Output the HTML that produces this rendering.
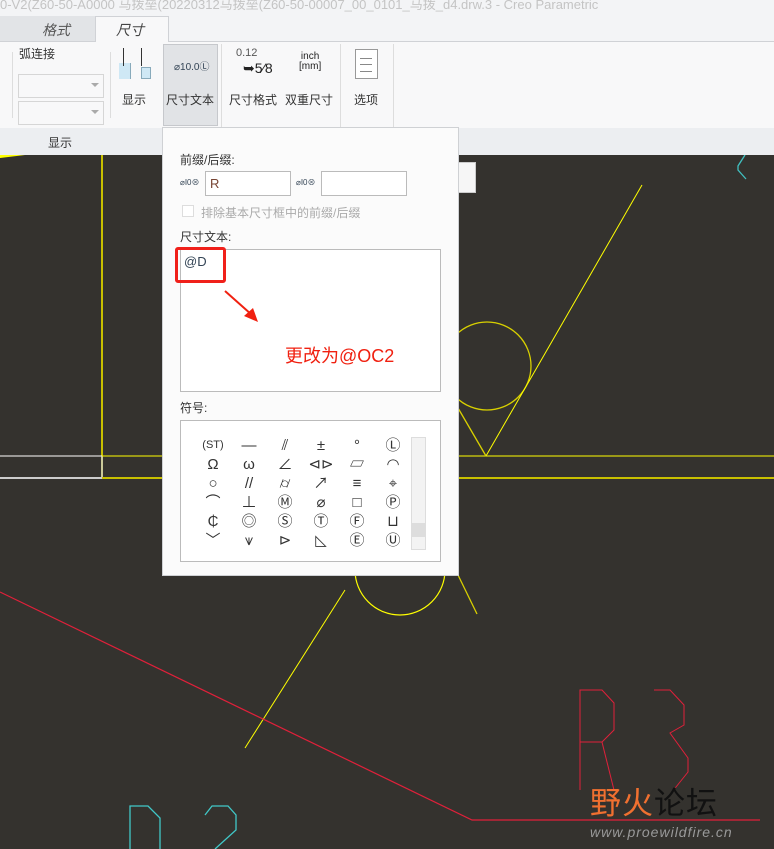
<!DOCTYPE html>
<html><head><meta charset="utf-8"><style>
*{margin:0;padding:0;box-sizing:border-box}
body{width:774px;height:849px;overflow:hidden;background:#34322e;font-family:"Liberation Sans","Noto Sans CJK SC",sans-serif;position:relative}
.abs{position:absolute}
.t{font-size:12px;color:#333;white-space:nowrap}
</style></head><body>
<svg class="abs" style="left:0;top:0" width="774" height="849">
<rect x="0" y="155" width="774" height="694" fill="#34322e"/>
<line x1="102" y1="155" x2="102" y2="478" stroke="#c8c000" stroke-width="2"/>
<line x1="0" y1="456" x2="102" y2="456" stroke="#fff" stroke-width="1"/>
<line x1="0" y1="478" x2="102" y2="478" stroke="#ccc" stroke-width="2"/>
<line x1="102" y1="456" x2="102" y2="478" stroke="#ccc" stroke-width="1.5"/>
<line x1="102" y1="456" x2="774" y2="456" stroke="#ffff00" stroke-width="1"/>
<line x1="102" y1="478" x2="774" y2="478" stroke="#c8c000" stroke-width="2"/>
<polygon points="0,158 25,155 0,155" fill="#ffff00"/>
<circle cx="487" cy="366" r="44" fill="none" stroke="#d8d000" stroke-width="1.3"/>
<line x1="486" y1="456" x2="642" y2="185" stroke="#ffff00" stroke-width="1"/>
<line x1="458" y1="408" x2="486" y2="456" stroke="#d8d000" stroke-width="1.3"/>
<polyline points="745,155 738,166 738,170 746,179" fill="none" stroke="#40c0c0" stroke-width="1.3"/>
<circle cx="400" cy="570" r="45" fill="none" stroke="#ffff00" stroke-width="1.2"/>
<line x1="458" y1="575" x2="477" y2="614" stroke="#d8d000" stroke-width="1.3"/>
<line x1="245" y1="748" x2="345" y2="590" stroke="#ffff00" stroke-width="1"/>
<polyline points="0,592 472,820 760,820" fill="none" stroke="#e0203a" stroke-width="1.2"/>
<polyline points="580,790 580,690 602,690 614,703 614,730 602,742 580,742" fill="none" stroke="#e0203a" stroke-width="1"/>
<line x1="602" y1="742" x2="614" y2="790" stroke="#e0203a" stroke-width="1"/>
<polyline points="654,690 670,690 684,705 684,725 670,733 688,758 688,772 672,792" fill="none" stroke="#e0203a" stroke-width="1"/>
<polyline points="130,849 130,806 148,806 160,818 160,849" fill="none" stroke="#40c8c8" stroke-width="1.3"/>
<polyline points="205,815 212,806 228,806 236,815 236,830 215,849" fill="none" stroke="#40c8c8" stroke-width="1.3"/>
</svg>
<div class="abs" style="left:590px;top:786px;font-size:31px;color:#f07030;letter-spacing:1px;line-height:36px">野火<span style="color:#111">论坛</span></div>
<div class="abs" style="left:590px;top:824px;font-size:14px;font-style:italic;color:#999;letter-spacing:1px">www.proewildfire.cn</div>
<!-- top chrome -->
<div class="abs" style="left:0;top:0;width:774px;height:155px;background:#f3f4f6"></div>
<div class="abs t" style="left:0;top:-6px;color:#c4c4c4;font-size:13px">0-V2(Z60-50-A0000 马拨垒(20220312马拨垒(Z60-50-00007_00_0101_马拨_d4.drw.3 - Creo Parametric</div>
<div class="abs" style="left:0;top:16px;width:95px;height:26px;background:#e2e4e7"></div>
<div class="abs" style="left:0;top:41px;width:774px;height:1px;background:#d0d2d6"></div>
<div class="abs" style="left:95px;top:16px;width:74px;height:26px;background:#f8f8f9;border:1px solid #d0d2d6;border-bottom:none"></div>
<div class="abs t" style="left:42px;top:20px;font-size:14px;font-style:italic;color:#555">格式</div>
<div class="abs t" style="left:116px;top:20px;font-size:14px;font-style:italic;color:#444">尺寸</div>
<div class="abs" style="left:0;top:42px;width:774px;height:86px;background:#f8f8f9"></div>
<div class="abs" style="left:0;top:128px;width:162px;height:27px;background:#eceef1"></div>
<div class="abs t" style="left:48px;top:134px">显示</div>
<div class="abs t" style="left:19px;top:45px">弧连接</div>
<div class="abs" style="left:12px;top:52px;width:1px;height:66px;background:#ddd"></div>
<div class="abs" style="left:18px;top:74px;width:86px;height:24px;border:1px solid #d6d6d6;background:#f8f8f9"><span style="position:absolute;right:4px;top:8px;border:4px solid transparent;border-top-color:#aaa"></span></div>
<div class="abs" style="left:18px;top:101px;width:86px;height:24px;border:1px solid #d6d6d6;background:#f8f8f9"><span style="position:absolute;right:4px;top:8px;border:4px solid transparent;border-top-color:#aaa"></span></div>
<div class="abs" style="left:110px;top:52px;width:1px;height:66px;background:#ddd"></div>
<div class="abs" style="left:119px;top:63px;width:12px;height:16px;background:#cfe8f5;border-right:1px solid #8ab"></div>
<div class="abs" style="left:141px;top:67px;width:10px;height:12px;background:#cfe8f5;border:1px solid #8ab"></div>
<div class="abs" style="left:123px;top:48px;width:1px;height:18px;background:#333"></div>
<div class="abs" style="left:141px;top:48px;width:1px;height:18px;background:#333"></div>
<div class="abs t" style="left:122px;top:91px">显示</div>
<div class="abs" style="left:163px;top:44px;width:55px;height:82px;background:#e1e3e6;border:1px solid #c6c8cc"></div>
<div class="abs t" style="left:174px;top:58px;font-size:10px;color:#345">⌀10.0Ⓛ</div>
<div class="abs t" style="left:166px;top:91px">尺寸文本</div>
<div class="abs" style="left:221px;top:44px;width:1px;height:84px;background:#ddd"></div>
<div class="abs t" style="left:236px;top:47px;font-size:11px;color:#555">0.12</div>
<div class="abs t" style="left:243px;top:60px;font-size:14px;color:#222">➥5⁄8</div>
<div class="abs t" style="left:229px;top:91px">尺寸格式</div>
<div class="abs t" style="left:299px;top:52px;font-size:10px;line-height:10px;text-align:center;color:#222">inch<br>[mm]</div>
<div class="abs t" style="left:285px;top:91px">双重尺寸</div>
<div class="abs" style="left:340px;top:44px;width:1px;height:84px;background:#ddd"></div>
<div class="abs" style="left:355px;top:49px;width:23px;height:30px;background:#fff;border:1px solid #999"></div>
<div class="abs" style="left:360px;top:58px;width:12px;height:14px;border-top:1px solid #888;border-bottom:1px solid #888"></div>
<div class="abs" style="left:360px;top:64px;width:12px;height:1px;background:#888"></div>
<div class="abs t" style="left:354px;top:91px">选项</div>
<div class="abs" style="left:393px;top:44px;width:1px;height:84px;background:#ddd"></div>
<div class="abs" style="left:162px;top:128px;width:612px;height:27px;background:#eceef1"></div>
<div class="abs" style="left:458px;top:162px;width:18px;height:31px;background:#f6f6f6;border:1px solid #ccc"></div>
<!-- dialog -->
<div class="abs" style="left:162px;top:127px;width:297px;height:449px;background:#fbfbfb;border:1px solid #cfd1d4"></div>
<div class="abs t" style="left:180px;top:151px">前缀/后缀:</div>
<div class="abs t" style="left:180px;top:177px;font-size:8px;color:#345">⌀I0⊗</div>
<div class="abs" style="left:205px;top:171px;width:86px;height:25px;background:#fff;border:1px solid #bbb"></div>
<div class="abs t" style="left:210px;top:176px;font-size:13px;color:#743">R</div>
<div class="abs t" style="left:296px;top:177px;font-size:8px;color:#345">⌀I0⊗</div>
<div class="abs" style="left:321px;top:171px;width:86px;height:25px;background:#fff;border:1px solid #bbb"></div>
<div class="abs" style="left:182px;top:205px;width:12px;height:12px;border:1px solid #ddd;background:#fff"></div>
<div class="abs t" style="left:201px;top:204px;color:#aaa">排除基本尺寸框中的前缀/后缀</div>
<div class="abs t" style="left:180px;top:228px">尺寸文本:</div>
<div class="abs" style="left:180px;top:249px;width:261px;height:143px;background:#fff;border:1px solid #bbb"></div>
<div class="abs t" style="left:184px;top:254px;font-size:13px;color:#345">@D</div>
<div class="abs" style="left:175px;top:247px;width:51px;height:36px;border:3px solid #f0201a;border-radius:3px"></div>
<svg class="abs" style="left:222px;top:288px" width="40" height="36"><line x1="3" y1="3" x2="30" y2="27" stroke="#f02010" stroke-width="2"/><polygon points="36,34 22,28 31,20" fill="#f02010"/></svg>
<div class="abs t" style="left:285px;top:342px;font-size:18px;color:#f02010">更改为@OC2</div>
<div class="abs t" style="left:180px;top:399px">符号:</div>
<div class="abs" style="left:180px;top:420px;width:261px;height:142px;background:#fff;border:1px solid #bbb"></div>
<div class="abs" style="left:411px;top:437px;width:15px;height:113px;background:#f3f3f3;border:1px solid #ddd"></div>
<div class="abs" style="left:412px;top:523px;width:13px;height:14px;background:#ddd"></div>
<div class="abs" style="left:195px;top:436px;width:216px;font-size:15px;color:#333;line-height:19px;display:grid;grid-template-columns:repeat(6,36px);text-align:center">
<span style="font-size:11px">(ST)</span><span>—</span><span>⫽</span><span>±</span><span>°</span><span>Ⓛ</span>
<span>Ω</span><span>ω</span><span>∠</span><span>⊲⊳</span><span>▱</span><span>◠</span>
<span>○</span><span>//</span><span>⌭</span><span>↗</span><span>≡</span><span>⌖</span>
<span>⌒</span><span>⊥</span><span>Ⓜ</span><span>⌀</span><span>□</span><span>Ⓟ</span>
<span>₵</span><span>◎</span><span>Ⓢ</span><span>Ⓣ</span><span>Ⓕ</span><span>⊔</span>
<span>﹀</span><span>⩛</span><span>⊳</span><span>◺</span><span>Ⓔ</span><span>Ⓤ</span>
</div>
</body></html>
